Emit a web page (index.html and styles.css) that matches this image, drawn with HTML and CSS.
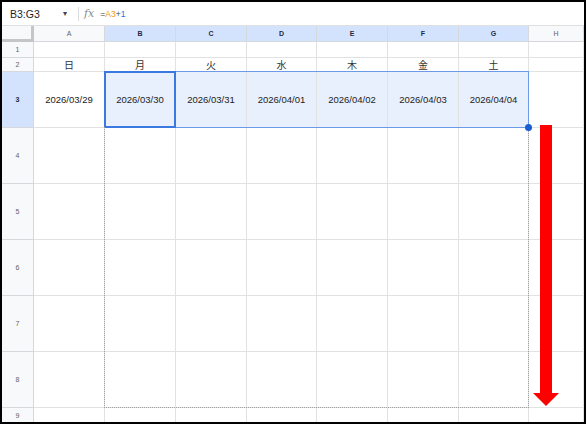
FILE: index.html
```html
<!DOCTYPE html>
<html lang="ja">
<head>
  <meta charset="UTF-8">
  <meta name="viewport" content="width=device-width, initial-scale=1.0">
  <title>曜日と日付</title>
  <link rel="stylesheet" href="styles.css">
</head>
<body>
  <div class="frame">
    <div class="formula-bar">
      <div class="name-box">
        <span>B3:G3</span>
        <span class="caret">&#9662;</span>
      </div>
      <div class="divider"></div>
      <div class="fx">fx</div>
      <div class="formula">=<span class="ref">A3</span>+<span class="num">1</span></div>
    </div>

    <div class="sheet" id="sheet">
      <!-- grid cells are filled in by the script below -->
      <div class="range-box"></div>
      <div class="active-cell"></div>
      <div class="fill-preview"></div>
      <div class="fill-handle"></div>
      <svg class="drag-arrow" width="26" height="282" viewBox="0 0 26 282">
        <rect x="7" y="0" width="12" height="269" fill="#ff0000"/>
        <polygon points="0,268 26,268 13,281" fill="#ff0000"/>
      </svg>
    </div>
  </div>

  <script>
    const columns = ['A', 'B', 'C', 'D', 'E', 'F', 'G', 'H'];
    const days = ['日', '月', '火', '水', '木', '金', '土'];
    const dates = ['2026/03/29', '2026/03/30', '2026/03/31', '2026/04/01',
                   '2026/04/02', '2026/04/03', '2026/04/04'];
    const rowCount = 9;
    const sheet = document.getElementById('sheet');
    const firstOverlay = sheet.firstElementChild;

    function addCell(className, text) {
      const cell = document.createElement('div');
      cell.className = className;
      if (text) cell.textContent = text;
      sheet.insertBefore(cell, firstOverlay);
    }

    // column headers
    addCell('corner');
    columns.forEach((col, i) => {
      const selected = i >= 1 && i <= 6;
      addCell(selected ? 'col-hdr picked' : 'col-hdr', col);
    });

    // rows
    for (let r = 1; r <= rowCount; r++) {
      addCell(r === 3 ? 'row-hdr picked' : 'row-hdr', String(r));
      columns.forEach((col, i) => {
        let text = '';
        let cls = 'cell';
        if (r === 2 && i < 7) { text = days[i]; cls += ' day'; }
        if (r === 3 && i < 7) { text = dates[i]; }
        if (r === 3 && i >= 1 && i <= 6) cls += ' sel';
        addCell(cls, text);
      });
    }
  </script>
</body>
</html>
```

FILE: styles.css
```css
body {
  margin: 0;
  padding: 0;
  background: #fff;
  font-family: "Liberation Sans", Arial, "Noto Sans CJK JP", sans-serif;
}

.frame {
  width: 586px;
  height: 424px;
  box-sizing: border-box;
  border: 2px solid #000;
  overflow: hidden;
  background: #fff;
}

/* formula bar */
.formula-bar {
  height: 23px;
  display: flex;
  align-items: center;
  color: #1f1f1f;
}

.name-box {
  width: 70px;
  box-sizing: border-box;
  padding-left: 8px;
  padding-right: 5px;
  display: flex;
  justify-content: space-between;
  align-items: center;
  font-size: 10.5px;
}

.caret {
  font-size: 8px;
  color: #444;
}

.divider {
  width: 1px;
  height: 14px;
  background: #dadce0;
  margin-left: 6px;
}

.fx {
  margin-left: 5px;
  font-family: "DejaVu Serif", "Liberation Serif", serif;
  font-style: italic;
  font-size: 11px;
  color: #8a8a8a;
}

.formula {
  margin-left: 6px;
  font-size: 8.5px;
  color: #444;
}

.formula .ref {
  color: #f29900;
}

.formula .num {
  color: #1a73e8;
}

/* grid */
.sheet {
  position: relative;
  display: grid;
  grid-template-columns: 32px 71px 71px 71px 70px 71px 71px 70px 1fr;
  grid-template-rows: 16px 16px 14px repeat(6, 56px) 15px;
  border-top: 1px solid #e0e0e0;
}

.sheet > div {
  box-sizing: border-box;
  border-right: 1px solid #e2e2e2;
  border-bottom: 1px solid #e2e2e2;
  display: flex;
  align-items: center;
  justify-content: center;
}

.corner {
  background: #f8f9fa;
  border-right: 3px solid #c4c7c5 !important;
  border-bottom: 3px solid #c4c7c5 !important;
}

.col-hdr,
.row-hdr {
  background: #f8f9fa;
  color: #5f6368;
  font-size: 7px;
}

.sheet > .col-hdr,
.sheet > .row-hdr {
  border-color: #d6d8db;
}

.col-hdr.picked,
.row-hdr.picked {
  background: #d3e3fd;
  color: #1f2a44;
  font-weight: bold;
}

.cell {
  font-size: 9.5px;
  color: #222;
}

.cell.day {
  font-family: "Noto Sans CJK JP", sans-serif;
  font-size: 10px;
  color: #333;
}

.cell.sel {
  background: #e8f0fe;
}

/* selection and drag overlays */
.sheet > .range-box {
  position: absolute;
  left: 102px;
  top: 45px;
  width: 425px;
  height: 57px;
  border: 1px solid #6d9ae8;
}

.sheet > .active-cell {
  position: absolute;
  left: 102px;
  top: 45px;
  width: 72px;
  height: 57px;
  border: 2px solid #3b78e0;
}

.sheet > .fill-preview {
  position: absolute;
  left: 102px;
  top: 101px;
  width: 425px;
  height: 281px;
  border: 1px dotted #a0a0a0;
  border-top: none;
}

.sheet > .fill-handle {
  position: absolute;
  left: 523px;
  top: 98px;
  width: 7px;
  height: 7px;
  border: none;
  border-radius: 50%;
  background: #1a5fd0;
}

.drag-arrow {
  position: absolute;
  left: 531px;
  top: 99px;
}
```
